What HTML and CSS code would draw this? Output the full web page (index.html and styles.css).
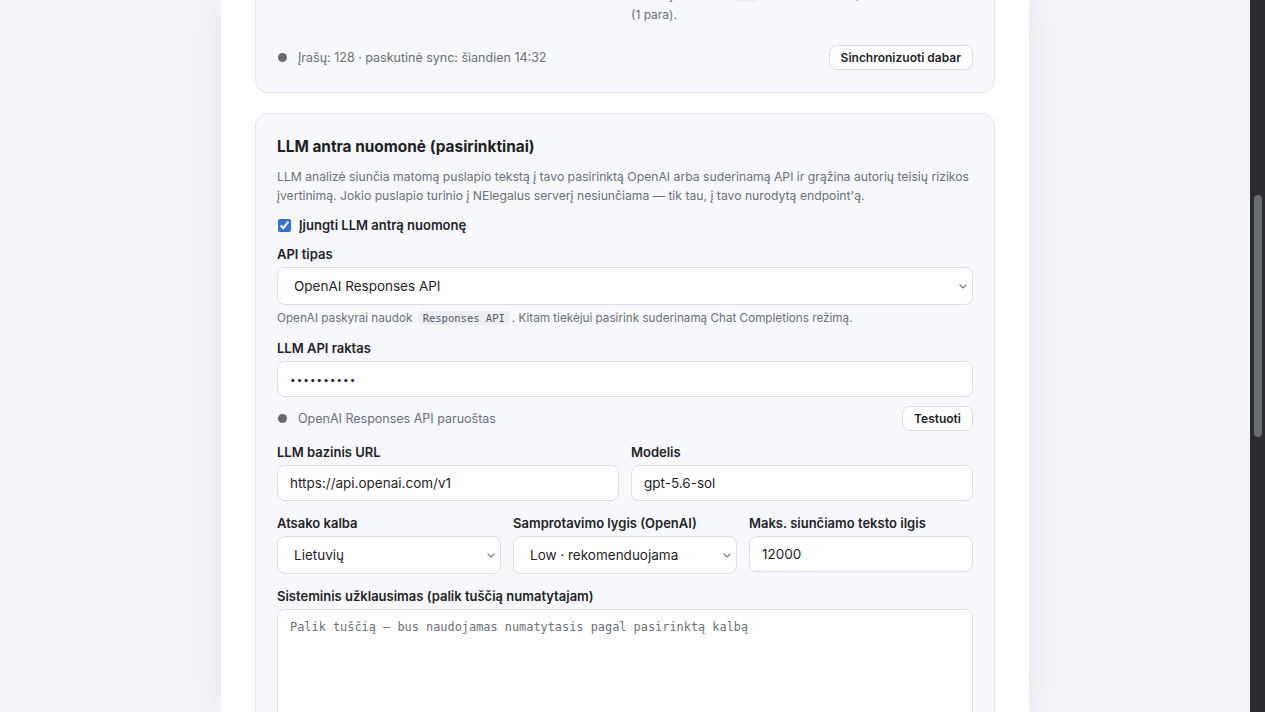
FILE: index.html
```html
<!DOCTYPE html>
<html lang="lt">
<head>
  <meta charset="UTF-8" />
  <title>NElegalus | Nustatymai</title>
  <link rel="stylesheet" href="styles.css">
</head>
<body>

  <main class="stage">
    <div class="panel">
      <div class="panel-scroll">

        <!-- Sync card (scrolled, top cut off) -->
        <section class="card sync-card">
          <div class="two-col">
            <div></div>
            <p class="hint-text">Numatyta — 120 · <code>60</code> min. minimalus 5, maksimalus 1440<br>(1 para).</p>
          </div>
          <div class="status-row sync-status">
            <span class="dot"></span>
            <span class="status-text">Įrašų: 128 · paskutinė sync: šiandien 14:32</span>
            <button class="btn">Sinchronizuoti dabar</button>
          </div>
        </section>

        <!-- LLM card -->
        <section class="card llm-card">
          <h3>LLM antra nuomonė (pasirinktinai)</h3>
          <p class="desc">LLM analizė siunčia matomą puslapio tekstą į tavo pasirinktą OpenAI arba suderinamą API ir grąžina autorių teisių rizikos įvertinimą. Jokio puslapio turinio į NElegalus serverį nesiunčiama — tik tau, į tavo nurodytą endpoint'ą.</p>

          <label class="check-row">
            <input type="checkbox" checked>
            <span>Įjungti LLM antrą nuomonę</span>
          </label>

          <div class="field f-api">
            <label>API tipas</label>
            <div class="select-wrap">
              <select class="control select-tall">
                <option>OpenAI Responses API</option>
              </select>
              <svg class="chev" width="8" height="5" viewBox="0 0 8 5"><path d="M1 1l3 3 3-3" fill="none" stroke="#777" stroke-width="1.1" stroke-linecap="round" stroke-linejoin="round"/></svg>
            </div>
          </div>
          <p class="hint">OpenAI paskyrai naudok <code>Responses API</code>. Kitam tiekėjui pasirink suderinamą Chat Completions režimą.</p>

          <div class="field f-key">
            <label>LLM API raktas</label>
            <input class="control" type="password" value="sk-proj-12">
          </div>

          <div class="status-row key-status">
            <span class="dot"></span>
            <span class="status-text">OpenAI Responses API paruoštas</span>
            <button class="btn">Testuoti</button>
          </div>

          <div class="two-col row-url">
            <div class="field">
              <label>LLM bazinis URL</label>
              <input class="control" type="text" value="https://api.openai.com/v1">
            </div>
            <div class="field">
              <label>Modelis</label>
              <input class="control" type="text" value="gpt-5.6-sol">
            </div>
          </div>

          <div class="three-col row-lang">
            <div class="field">
              <label>Atsako kalba</label>
              <div class="select-wrap">
                <select class="control select-tall">
                  <option>Lietuvių</option>
                </select>
                <svg class="chev" width="8" height="5" viewBox="0 0 8 5"><path d="M1 1l3 3 3-3" fill="none" stroke="#777" stroke-width="1.1" stroke-linecap="round" stroke-linejoin="round"/></svg>
              </div>
            </div>
            <div class="field">
              <label>Samprotavimo lygis (OpenAI)</label>
              <div class="select-wrap">
                <select class="control select-tall">
                  <option>Low · rekomenduojama</option>
                </select>
                <svg class="chev" width="8" height="5" viewBox="0 0 8 5"><path d="M1 1l3 3 3-3" fill="none" stroke="#777" stroke-width="1.1" stroke-linecap="round" stroke-linejoin="round"/></svg>
              </div>
            </div>
            <div class="field">
              <label>Maks. siunčiamo teksto ilgis</label>
              <input class="control" type="text" value="12000">
            </div>
          </div>

          <div class="field f-prompt">
            <label>Sisteminis užklausimas (palik tuščią numatytajam)</label>
            <textarea class="control prompt" placeholder="Palik tuščią — bus naudojamas numatytasis pagal pasirinktą kalbą"></textarea>
          </div>
        </section>

      </div>
    </div>
  </main>

  <!-- window scrollbar -->
  <aside class="scrollbar">
    <div class="thumb"></div>
  </aside>

</body>
</html>
```

FILE: styles.css
```css
* {
  box-sizing: border-box;
  margin: 0;
  padding: 0;
}

body {
  display: flex;
  height: 712px;
  overflow: hidden;
  background: #f3f4f7;
  color: #1f2328;
  font-family: "Inter", "Noto Sans", sans-serif;
}

.stage {
  flex: 1;
  display: flex;
  justify-content: center;
}

.panel {
  width: 808px;
  height: 100%;
  overflow: hidden;
  padding: 0 34px;
  background: #fff;
  box-shadow: 0 0 40px rgba(20, 30, 50, 0.06);
}

/* page is scrolled down a bit */
.panel-scroll {
  margin-top: -37px;
}

.card {
  display: flex;
  flex-direction: column;
  padding: 21px;
  background: #f7f8fb;
  border: 1px solid #e5e7ec;
  border-radius: 13px;
}

.sync-card {
  padding-bottom: 22px;
}

.llm-card {
  margin-top: 20px;
  padding-top: 23px;
  padding-bottom: 40px;
}

.two-col {
  display: grid;
  grid-template-columns: 1fr 1fr;
  gap: 12px;
}

.three-col {
  display: grid;
  grid-template-columns: 1fr 1fr 1fr;
  gap: 12px;
  align-items: start;
}

.hint-text {
  font-size: 12px;
  line-height: 19px;
  color: #6b7078;
}

code {
  font-family: "DejaVu Sans Mono", monospace;
  font-size: 10.5px;
  padding: 1px 5px;
  background: #eceef2;
  border-radius: 4px;
  color: #555a62;
}

.status-row {
  display: flex;
  align-items: center;
  height: 25px;
}

.sync-status {
  margin-top: 21px;
}

.dot {
  width: 9px;
  height: 9px;
  margin: 0 11px 0 1px;
  border-radius: 50%;
  background: #67696e;
}

.status-text {
  flex: 1;
  font-size: 12.5px;
  color: #6b7078;
}

.btn {
  height: 25px;
  padding: 0 11px;
  font-family: inherit;
  font-size: 12px;
  font-weight: 600;
  color: #1f2328;
  background: #fff;
  border: 1px solid #d9dce2;
  border-radius: 8px;
}

.llm-card h3 {
  font-size: 15.4px;
  font-weight: 700;
  line-height: 20px;
  color: #1d1f23;
}

.desc {
  margin-top: 10px;
  font-size: 12.2px;
  line-height: 19px;
  color: #6b7078;
}

.check-row {
  display: flex;
  align-items: center;
  gap: 8px;
  margin-top: 11px;
  height: 18px;
  font-size: 13px;
  font-weight: 600;
}

.check-row input {
  width: 13px;
  height: 13px;
  margin: 0 0 0 1px;
  accent-color: #2f6fdf;
}

.field {
  display: flex;
  flex-direction: column;
  gap: 4px;
}

.field label {
  font-size: 13px;
  font-weight: 600;
  line-height: 18px;
}

.f-api {
  margin-top: 11px;
}

.f-key,
.f-prompt,
.row-lang {
  margin-top: 13px;
}

.row-url {
  margin-top: 12px;
}

.key-status {
  margin-top: 9px;
}

.control {
  width: 100%;
  height: 36px;
  padding: 0 12px;
  font-family: inherit;
  font-size: 13.5px;
  color: #1f2328;
  background: #fff;
  border: 1px solid #dcdfe5;
  border-radius: 8px;
  outline: none;
}

input[type="password"] {
  font-size: 10px;
  letter-spacing: 1px;
}

.select-wrap {
  position: relative;
}

.select-tall {
  height: 38px;
  padding: 0 30px 0 16px;
  appearance: none;
}

.chev {
  position: absolute;
  right: 6px;
  top: 17px;
}

.hint {
  margin-top: 5px;
  font-size: 11.7px;
  line-height: 16px;
  color: #6b7078;
}

.hint code {
  margin: 0 2px;
}

.prompt {
  height: 130px;
  padding: 9px 12px;
  resize: vertical;
  font-family: "DejaVu Sans Mono", monospace;
  font-size: 11.9px;
  line-height: 16px;
}

.prompt::placeholder {
  color: #6e7178;
}

.scrollbar {
  width: 15px;
  background: #2b2c2f;
  padding: 195px 3px 0 4px;
}

.thumb {
  height: 242px;
  background: #686b6f;
  border-radius: 4px;
}
```
